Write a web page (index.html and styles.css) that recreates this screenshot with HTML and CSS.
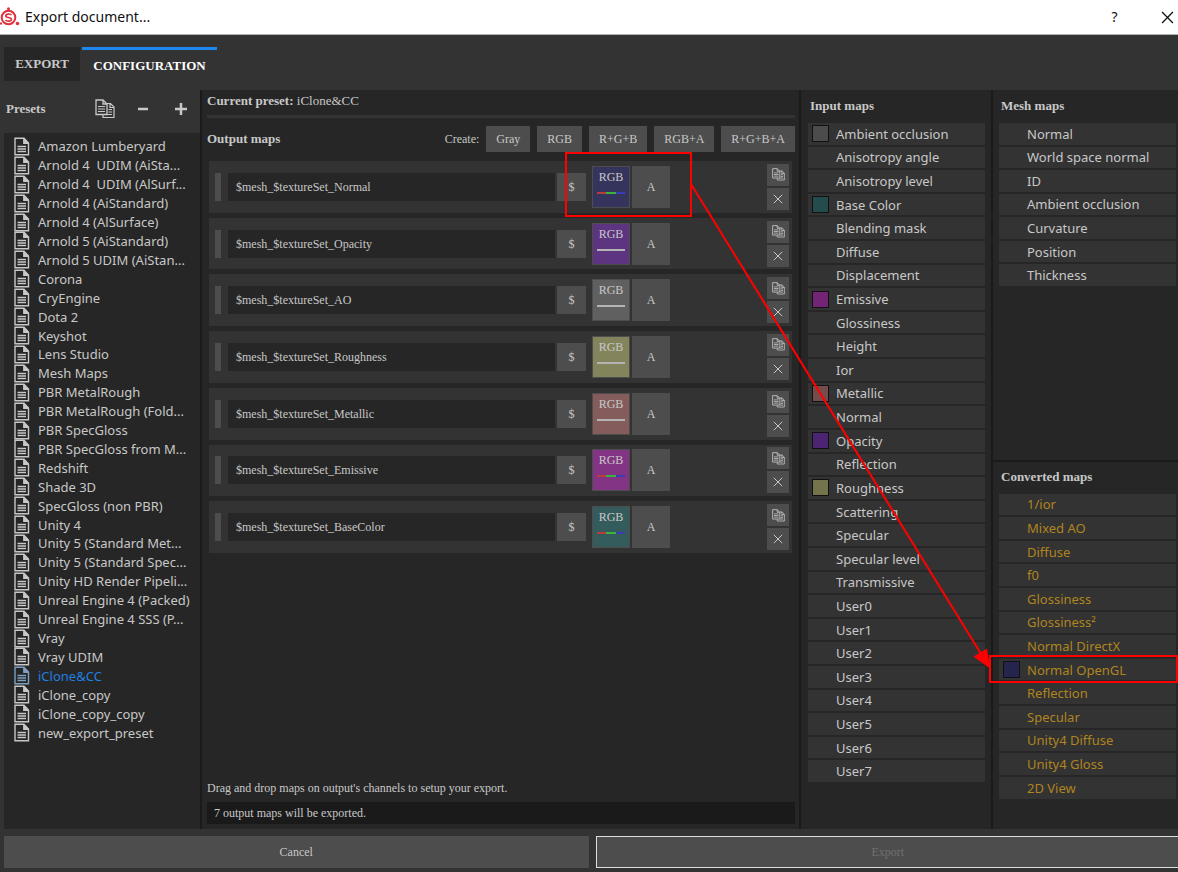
FILE: index.html
```html
<!DOCTYPE html>
<html lang="en">
<head>
<meta charset="utf-8">
<title>Export document...</title>
<link rel="stylesheet" href="styles.css">
</head>
<body>
<svg class="defs" aria-hidden="true">
  <symbol id="doc" viewBox="0 0 16 19"><path d="M1 1.2H10L14.5 6V17.8H1Z M9.8 1.5V6.2H14.5" fill="none" stroke="currentColor" stroke-width="1.4"/><path d="M10 1.2L14.5 6H10Z" fill="currentColor"/><path d="M3.5 9.5H12M3.5 12H12M3.5 14.5H12" stroke="currentColor" stroke-width="1.3"/></symbol>
  <symbol id="copy" viewBox="0 0 20 20"><path d="M1 1H8L12 5V15.500H1Z M8 1V5H12" fill="none" stroke="currentColor" stroke-width="1.300"/><path d="M3 7.500H10M3 10H10M3 12.500H10" stroke="currentColor" stroke-width="1.200"/><path d="M12 4.500H15.500L19 8V18.500H8V16 M15 4.500V8.500H19 M13.500 10.500H17M13.500 13H17M12 15.500H17" fill="none" stroke="currentColor" stroke-width="1.200"/></symbol>
  <symbol id="cross" viewBox="0 0 12 12"><path d="M1 1L11 11M11 1L1 11" stroke="currentColor" stroke-width="1.200"/></symbol>
</svg>
<header class="titlebar">
  <svg class="logo" viewBox="0 0 20 20" aria-hidden="true"><circle cx="8.500" cy="10.500" r="6.800" fill="none" stroke="#e0303c" stroke-width="2"/><path d="M11.500 8.200C10.500 6.500 5.800 6.700 5.800 8.900C5.800 11 11.500 10 11.500 12.400C11.500 14.700 6.500 14.500 5.500 12.900" fill="none" stroke="#e0303c" stroke-width="1.600"/><circle cx="8.500" cy="1.800" r="1.500" fill="#e0303c"/><circle cx="17.500" cy="16.500" r="1.800" fill="#e0303c"/><circle cx="1" cy="16.500" r="1.200" fill="#e0303c"/></svg>
  <h1 class="title">Export document...</h1>
  <button class="win-btn" aria-label="Help">?</button>
  <button class="win-btn" aria-label="Close"><svg class="close-icon"><use href="#cross"/></svg></button>
</header>
<nav class="tabs">
  <button class="tab">EXPORT</button>
  <button class="tab tab-active">CONFIGURATION</button>
</nav>
<main class="panels">
  <section class="presets">
    <div class="presets-head">
      <h2 class="heading">Presets</h2>
      <button class="tool" aria-label="Duplicate preset"><svg class="tool-icon"><use href="#copy"/></svg></button>
      <button class="tool" aria-label="Remove preset"><svg class="sign" viewBox="0 0 12 12"><path d="M1 6H11" stroke="currentColor" stroke-width="2.500"/></svg></button>
      <button class="tool" aria-label="Add preset"><svg class="sign" viewBox="0 0 12 12"><path d="M0 6H12M6 0V12" stroke="currentColor" stroke-width="2.500"/></svg></button>
    </div>
    <div class="preset-box">
      <ul class="preset-list">
        <li><button class="preset"><svg class="doc"><use href="#doc"/></svg>Amazon Lumberyard</button></li>
        <li><button class="preset"><svg class="doc"><use href="#doc"/></svg>Arnold 4&nbsp; UDIM (AiSta...</button></li>
        <li><button class="preset"><svg class="doc"><use href="#doc"/></svg>Arnold 4&nbsp; UDIM (AlSurf...</button></li>
        <li><button class="preset"><svg class="doc"><use href="#doc"/></svg>Arnold 4 (AiStandard)</button></li>
        <li><button class="preset"><svg class="doc"><use href="#doc"/></svg>Arnold 4 (AlSurface)</button></li>
        <li><button class="preset"><svg class="doc"><use href="#doc"/></svg>Arnold 5 (AiStandard)</button></li>
        <li><button class="preset"><svg class="doc"><use href="#doc"/></svg>Arnold 5 UDIM (AiStan...</button></li>
        <li><button class="preset"><svg class="doc"><use href="#doc"/></svg>Corona</button></li>
        <li><button class="preset"><svg class="doc"><use href="#doc"/></svg>CryEngine</button></li>
        <li><button class="preset"><svg class="doc"><use href="#doc"/></svg>Dota 2</button></li>
        <li><button class="preset"><svg class="doc"><use href="#doc"/></svg>Keyshot</button></li>
        <li><button class="preset"><svg class="doc"><use href="#doc"/></svg>Lens Studio</button></li>
        <li><button class="preset"><svg class="doc"><use href="#doc"/></svg>Mesh Maps</button></li>
        <li><button class="preset"><svg class="doc"><use href="#doc"/></svg>PBR MetalRough</button></li>
        <li><button class="preset"><svg class="doc"><use href="#doc"/></svg>PBR MetalRough (Fold...</button></li>
        <li><button class="preset"><svg class="doc"><use href="#doc"/></svg>PBR SpecGloss</button></li>
        <li><button class="preset"><svg class="doc"><use href="#doc"/></svg>PBR SpecGloss from M...</button></li>
        <li><button class="preset"><svg class="doc"><use href="#doc"/></svg>Redshift</button></li>
        <li><button class="preset"><svg class="doc"><use href="#doc"/></svg>Shade 3D</button></li>
        <li><button class="preset"><svg class="doc"><use href="#doc"/></svg>SpecGloss (non PBR)</button></li>
        <li><button class="preset"><svg class="doc"><use href="#doc"/></svg>Unity 4</button></li>
        <li><button class="preset"><svg class="doc"><use href="#doc"/></svg>Unity 5 (Standard Met...</button></li>
        <li><button class="preset"><svg class="doc"><use href="#doc"/></svg>Unity 5 (Standard Spec...</button></li>
        <li><button class="preset"><svg class="doc"><use href="#doc"/></svg>Unity HD Render Pipeli...</button></li>
        <li><button class="preset"><svg class="doc"><use href="#doc"/></svg>Unreal Engine 4 (Packed)</button></li>
        <li><button class="preset"><svg class="doc"><use href="#doc"/></svg>Unreal Engine 4 SSS (P...</button></li>
        <li><button class="preset"><svg class="doc"><use href="#doc"/></svg>Vray</button></li>
        <li><button class="preset"><svg class="doc"><use href="#doc"/></svg>Vray UDIM</button></li>
        <li><button class="preset preset-active"><svg class="doc"><use href="#doc"/></svg>iClone&amp;CC</button></li>
        <li><button class="preset"><svg class="doc"><use href="#doc"/></svg>iClone_copy</button></li>
        <li><button class="preset"><svg class="doc"><use href="#doc"/></svg>iClone_copy_copy</button></li>
        <li><button class="preset"><svg class="doc"><use href="#doc"/></svg>new_export_preset</button></li>
      </ul>
    </div>
  </section>

  <section class="outputs">
    <p class="current"><b>Current preset:</b> iClone&amp;CC</p>
    <div class="create">
      <h2 class="heading grow">Output maps</h2>
      <span class="create-label">Create:</span>
      <button class="btn">Gray</button>
      <button class="btn">RGB</button>
      <button class="btn">R+G+B</button>
      <button class="btn">RGB+A</button>
      <button class="btn">R+G+B+A</button>
    </div>
    <div class="cards">
      <div class="card">
        <span class="handle"></span><input class="name" aria-label="Output name" value="$mesh_$textureSet_Normal"><button class="var">$</button>
        <button class="channel navy">RGB<span class="bar rgb"></span></button><button class="channel alpha">A</button>
        <div class="actions"><button class="mini" aria-label="Duplicate"><svg class="mini-copy"><use href="#copy"/></svg></button><button class="mini" aria-label="Remove"><svg class="mini-cross"><use href="#cross"/></svg></button></div>
      </div>
      <div class="card">
        <span class="handle"></span><input class="name" aria-label="Output name" value="$mesh_$textureSet_Opacity"><button class="var">$</button>
        <button class="channel violet">RGB<span class="bar"></span></button><button class="channel alpha">A</button>
        <div class="actions"><button class="mini" aria-label="Duplicate"><svg class="mini-copy"><use href="#copy"/></svg></button><button class="mini" aria-label="Remove"><svg class="mini-cross"><use href="#cross"/></svg></button></div>
      </div>
      <div class="card">
        <span class="handle"></span><input class="name" aria-label="Output name" value="$mesh_$textureSet_AO"><button class="var">$</button>
        <button class="channel gray">RGB<span class="bar"></span></button><button class="channel alpha">A</button>
        <div class="actions"><button class="mini" aria-label="Duplicate"><svg class="mini-copy"><use href="#copy"/></svg></button><button class="mini" aria-label="Remove"><svg class="mini-cross"><use href="#cross"/></svg></button></div>
      </div>
      <div class="card">
        <span class="handle"></span><input class="name" aria-label="Output name" value="$mesh_$textureSet_Roughness"><button class="var">$</button>
        <button class="channel olive">RGB<span class="bar"></span></button><button class="channel alpha">A</button>
        <div class="actions"><button class="mini" aria-label="Duplicate"><svg class="mini-copy"><use href="#copy"/></svg></button><button class="mini" aria-label="Remove"><svg class="mini-cross"><use href="#cross"/></svg></button></div>
      </div>
      <div class="card">
        <span class="handle"></span><input class="name" aria-label="Output name" value="$mesh_$textureSet_Metallic"><button class="var">$</button>
        <button class="channel rose">RGB<span class="bar"></span></button><button class="channel alpha">A</button>
        <div class="actions"><button class="mini" aria-label="Duplicate"><svg class="mini-copy"><use href="#copy"/></svg></button><button class="mini" aria-label="Remove"><svg class="mini-cross"><use href="#cross"/></svg></button></div>
      </div>
      <div class="card">
        <span class="handle"></span><input class="name" aria-label="Output name" value="$mesh_$textureSet_Emissive"><button class="var">$</button>
        <button class="channel magenta">RGB<span class="bar rgb"></span></button><button class="channel alpha">A</button>
        <div class="actions"><button class="mini" aria-label="Duplicate"><svg class="mini-copy"><use href="#copy"/></svg></button><button class="mini" aria-label="Remove"><svg class="mini-cross"><use href="#cross"/></svg></button></div>
      </div>
      <div class="card">
        <span class="handle"></span><input class="name" aria-label="Output name" value="$mesh_$textureSet_BaseColor"><button class="var">$</button>
        <button class="channel teal">RGB<span class="bar rgb"></span></button><button class="channel alpha">A</button>
        <div class="actions"><button class="mini" aria-label="Duplicate"><svg class="mini-copy"><use href="#copy"/></svg></button><button class="mini" aria-label="Remove"><svg class="mini-cross"><use href="#cross"/></svg></button></div>
      </div>
    </div>
    <p class="hint">Drag and drop maps on output's channels to setup your export.</p>
    <p class="status">7 output maps will be exported.</p>
  </section>

  <section class="maps input">
    <h2 class="heading maps-title">Input maps</h2>
    <ul class="map-list input-list">
      <li class="map"><span class="swatch s-gray"></span>Ambient occlusion</li>
      <li class="map">Anisotropy angle</li>
      <li class="map">Anisotropy level</li>
      <li class="map"><span class="swatch s-teal"></span>Base Color</li>
      <li class="map">Blending mask</li>
      <li class="map">Diffuse</li>
      <li class="map">Displacement</li>
      <li class="map"><span class="swatch s-magenta"></span>Emissive</li>
      <li class="map">Glossiness</li>
      <li class="map">Height</li>
      <li class="map">Ior</li>
      <li class="map"><span class="swatch s-rose"></span>Metallic</li>
      <li class="map">Normal</li>
      <li class="map"><span class="swatch s-violet"></span>Opacity</li>
      <li class="map">Reflection</li>
      <li class="map"><span class="swatch s-olive"></span>Roughness</li>
      <li class="map">Scattering</li>
      <li class="map">Specular</li>
      <li class="map">Specular level</li>
      <li class="map">Transmissive</li>
      <li class="map">User0</li>
      <li class="map">User1</li>
      <li class="map">User2</li>
      <li class="map">User3</li>
      <li class="map">User4</li>
      <li class="map">User5</li>
      <li class="map">User6</li>
      <li class="map">User7</li>
    </ul>
  </section>

  <div class="side">
    <section class="maps mesh">
      <h2 class="heading maps-title">Mesh maps</h2>
      <ul class="map-list mesh-list">
        <li class="map">Normal</li>
        <li class="map">World space normal</li>
        <li class="map">ID</li>
        <li class="map">Ambient occlusion</li>
        <li class="map">Curvature</li>
        <li class="map">Position</li>
        <li class="map">Thickness</li>
      </ul>
    </section>
    <section class="maps converted">
      <h2 class="heading maps-title">Converted maps</h2>
      <ul class="map-list converted-list">
        <li class="map">1/ior</li>
        <li class="map">Mixed AO</li>
        <li class="map">Diffuse</li>
        <li class="map">f0</li>
        <li class="map">Glossiness</li>
        <li class="map">Glossiness²</li>
        <li class="map">Normal DirectX</li>
        <li class="map"><span class="swatch s-navy"></span>Normal OpenGL</li>
        <li class="map">Reflection</li>
        <li class="map">Specular</li>
        <li class="map">Unity4 Diffuse</li>
        <li class="map">Unity4 Gloss</li>
        <li class="map">2D View</li>
      </ul>
    </section>
  </div>
</main>
<footer class="footer">
  <button class="action">Cancel</button>
  <button class="action action-focus" disabled>Export</button>
</footer>
<svg class="annotation" viewBox="0 0 1178 872" aria-hidden="true">
  <g fill="none" stroke="#f00" stroke-width="2"><path d="M566 153H691V216H566Z"/><path d="M990 656H1177V682H990Z"/><path d="M691 184L983 657"/></g>
  <path d="M990 668.500L973.500 656.500L987 648.500Z" fill="#f00"/>
</svg>
</body>
</html>
```

FILE: styles.css
```css
* { box-sizing: border-box; }

body {
  margin: 0;
  min-height: 100vh;
  position: relative;
  display: flex;
  flex-direction: column;
  overflow-x: hidden;
  background: #333;
  color: #c8c8c8;
  font: 12px/16px "Liberation Serif", serif;
}

h1, h2, p, ul { margin: 0; padding: 0; }
ul { list-style: none; }

button {
  border: 0;
  padding: 0;
  background: none;
  color: inherit;
  font: inherit;
}

.defs { display: none; }

.titlebar {
  display: flex;
  align-items: center;
  height: 35px;
  background: #fff;
  border-bottom: 1px solid #b4b4b4;
  color: #111;
  font-family: "Noto Sans", sans-serif;
}
.logo { flex: none; width: 20px; height: 20px; margin-right: 5px; }
.title { flex: 1; font-size: 14px; font-weight: 400; }
.win-btn { width: 53px; height: 32px; font-size: 14px; }
.win-btn:last-child { width: 37px; padding-left: 20px; }
.close-icon { width: 13px; height: 13px; display: block; }

.tabs {
  display: flex;
  gap: 2px;
  padding: 12px 4px 9px;
}
.tab {
  height: 34px;
  width: 76px;
  background: #262626;
  font-size: 13px;
  font-weight: 700;
}
.tab-active {
  width: 135px;
  background: none;
  border-top: 3px solid #1e87f0;
  color: #fff;
}

.panels {
  flex: 1;
  display: grid;
  grid-template-columns: 196px minmax(0, 1fr) 192px 187px;
  padding-left: 4px;
}
.heading { font-size: 13px; line-height: 16px; font-weight: 700; }
.grow { flex: 1; }

.presets { display: flex; flex-direction: column; }
.presets-head {
  display: flex;
  align-items: center;
  height: 43px;
  padding: 0 13px 5px 2px;
}
.presets-head .heading { flex: 1; }
.tool { width: 38px; height: 24px; display: grid; place-items: center; }
.tool:last-child { width: 12px; margin-left: 13px; }
.tool-icon { width: 20px; height: 20px; }
.sign { width: 12px; height: 12px; }
.preset-box { flex: 1; background: #262626; padding: 4px 0 0 10px; }
.preset-list { display: grid; grid-auto-rows: minmax(0, 1fr); height: 605px; }
.preset {
  display: flex;
  align-items: center;
  gap: 8px;
  width: 100%;
  height: 100%;
  white-space: nowrap;
  font: 13px/18px "Noto Sans", sans-serif;
}
.doc { width: 16px; height: 19px; flex: none; }
.preset-active { color: #1e7fe0; }
.preset-active .doc { color: #7da0c0; }

.outputs {
  display: flex;
  flex-direction: column;
  padding: 3px 4px 5px 5px;
  background: #262626;
  border-left: 2px solid #1a1a1a;
}
.current { padding-bottom: 6px; border-bottom: 3px solid #333; font-size: 13px; }
.create { display: flex; align-items: center; gap: 7px; margin: 8px 0 9px; }
.btn { height: 26px; padding: 0 10px; background: #4d4d4d; }
.cards {
  display: grid;
  grid-auto-rows: 1fr;
  gap: 5px;
  height: 392px;
  margin: 0 3px 0 2px;
}
.card {
  display: flex;
  align-items: center;
  padding: 0 3px 0 6px;
  background: #333;
}
.handle { width: 6px; height: 28px; background: #4d4d4d; }
.name {
  flex: 1;
  min-width: 0;
  height: 28px;
  margin: 0 2px 0 7px;
  padding: 1px 8px 0;
  border: 0;
  background: #262626;
  color: inherit;
  font: inherit;
}
.var { width: 29px; height: 28px; background: #4d4d4d; }
.channel {
  display: flex;
  flex-direction: column;
  align-items: center;
  width: 38px;
  height: 42px;
  margin-left: 6px;
  padding-top: 2px;
  border: 1px solid #4d4d4d;
}
.alpha { margin-left: 2px; padding: 0; justify-content: center; background: #4d4d4d; }
.bar { width: 28px; height: 2px; margin-top: 7px; background: #b4b4b4; }
.rgb { background: linear-gradient(90deg, #b93c3c 33%, #3cb43c 33% 67%, #3c3cb9 67%); }
.navy { background: #34345c; }
.violet { background: #5c3480; }
.gray { background: #606060; }
.olive { background: #84845c; }
.rose { background: #845c5c; }
.magenta { background: #843484; }
.teal { background: #345c5c; }
.actions { display: grid; gap: 2px; margin-left: 97px; }
.mini { display: grid; place-items: center; width: 22px; height: 22px; background: #4d4d4d; }
.mini-copy { width: 13px; height: 13px; }
.mini-cross { width: 10px; height: 10px; }
.hint { margin-top: auto; padding-bottom: 6px; }
.status { padding: 3px 7px; background: #1a1a1a; }

.maps {
  padding: 8px 2px 0 6px;
  background: #262626;
  border-left: 2px solid #1a1a1a;
}
.input { padding-left: 7px; padding-right: 6px; }
.maps-title { padding-left: 2px; margin-bottom: 9px; }
.map-list { display: grid; grid-auto-rows: 1fr; gap: 2px; }
.input-list { height: 659px; }
.mesh-list { height: 163px; }
.converted-list { height: 305px; }
.map {
  position: relative;
  display: flex;
  align-items: center;
  padding-left: 28px;
  background: #333;
  font: 13px/18px "Noto Sans", sans-serif;
}
.swatch {
  position: absolute;
  left: 4px;
  width: 17px;
  height: 17px;
  border: 1px solid #111;
}
.s-gray { background: #4c4c4c; }
.s-teal { background: #244c4c; }
.s-magenta { background: #742474; }
.s-rose { background: #744c4c; }
.s-violet { background: #4c2474; }
.s-olive { background: #74744c; }
.s-navy { background: #24244c; }
.side { display: grid; grid-template-rows: 1fr 1fr; }
.converted { padding-top: 7px; border-top: 2px solid #1a1a1a; }
.converted .map { color: #b08420; }

.footer {
  display: grid;
  grid-template-columns: 1fr 1fr;
  gap: 7px;
  margin-right: -2px;
  padding: 7px 0 4px 4px;
}
.action { height: 32px; background: #4d4d4d; }
.action-focus { border: 1px solid #ddd; color: #707070; }

.annotation {
  position: absolute;
  top: 0;
  left: 0;
  width: 1178px;
  height: 872px;
  pointer-events: none;
}
```
